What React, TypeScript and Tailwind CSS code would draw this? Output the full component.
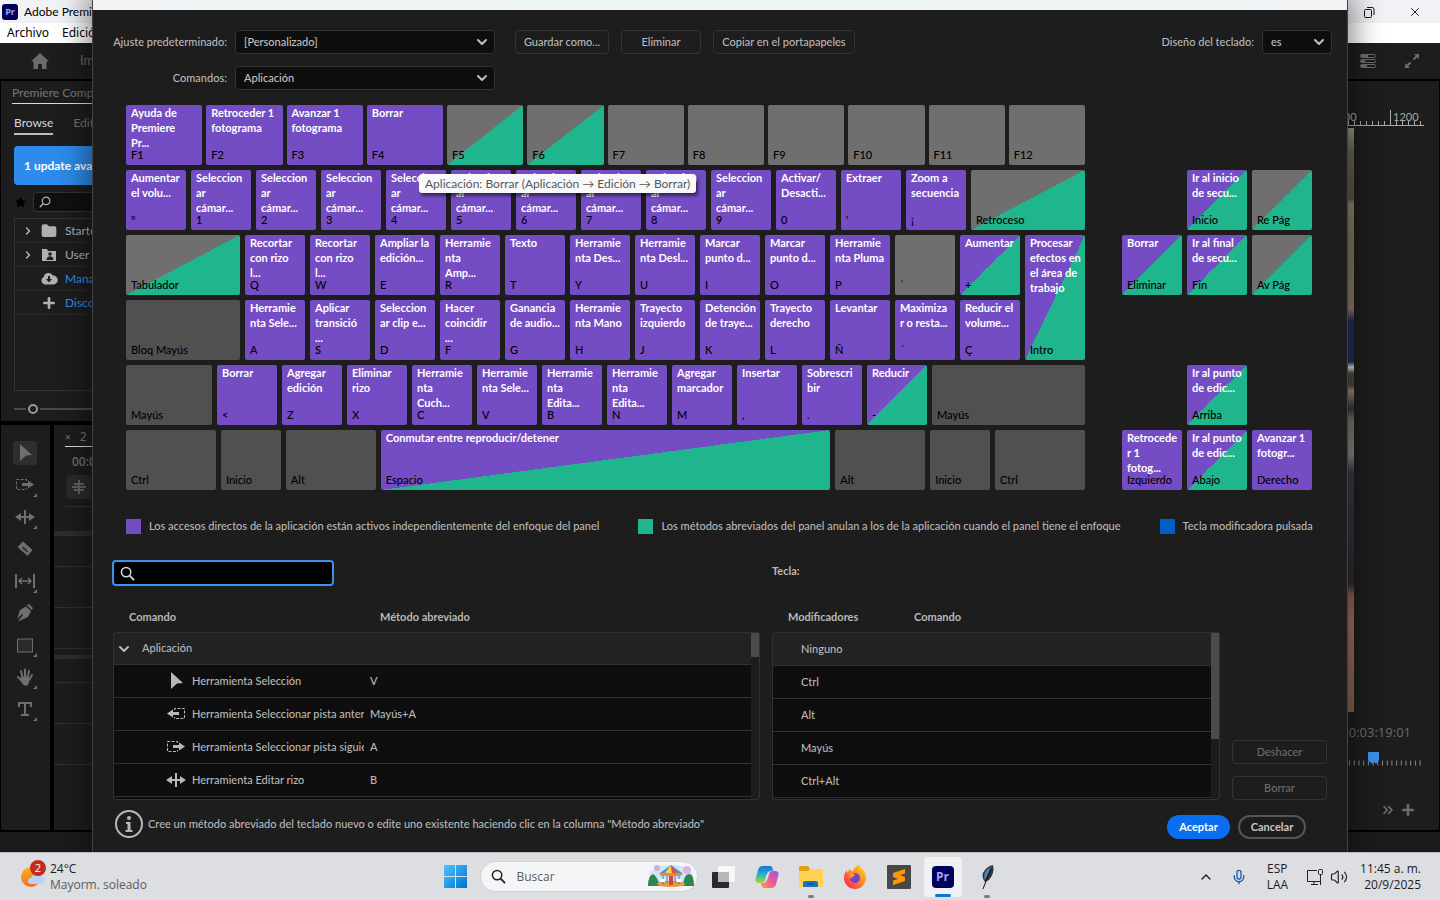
import type { ReactNode } from "react";
import {
  ChevronDown, ChevronRight, ChevronUp, ChevronsRight, Folder, Mic, Plus, Star, Volume2, X,
} from "lucide-react";

type Tone = "app" | "both" | "panel" | "free" | "mod";
type KeyDef = { k: string; t?: string[]; c?: Tone; w?: string };

const tones: Record<Tone, string> = {
  app: "bg-[#744cc4]",
  both: "bg-[linear-gradient(to_bottom_right,#744cc4_50%,#1fb58d_50%)]",
  panel: "bg-[linear-gradient(to_bottom_right,#6f6f6f_50%,#1fb58d_50%)]",
  free: "bg-[#6f6f6f]",
  mod: "bg-[#505050]",
};

const a = (k: string, ...t: string[]): KeyDef => ({ k, t, c: "app" });

const fRow: KeyDef[] = [
  a("F1", "Ayuda de", "Premiere", "Pr..."), a("F2", "Retroceder 1", "fotograma"),
  a("F3", "Avanzar 1", "fotograma"), a("F4", "Borrar"),
  { k: "F5", c: "panel" }, { k: "F6", c: "panel" },
  { k: "F7" }, { k: "F8" }, { k: "F9" }, { k: "F10" }, { k: "F11" }, { k: "F12" },
];

// Grow factors are key widths without their 10px of side padding.
const numberRow: KeyDef[] = [
  a("º", "Aumentar", "el volu..."),
  ...["1", "2", "3", "4", "5", "6", "7", "8", "9"].map((n) => a(n, "Seleccion", "ar", "cámar...")),
  a("0", "Activar/", "Desacti..."), a("'", "Extraer"), a("¡", "Zoom a", "secuencia"),
  { k: "Retroceso", c: "panel", w: "flex-[104]" },
];

const tabRow: KeyDef[] = [
  { k: "Tabulador", c: "panel", w: "flex-[104]" },
  a("Q", "Recortar", "con rizo", "l..."), a("W", "Recortar", "con rizo", "l..."),
  a("E", "Ampliar la", "edición..."), a("R", "Herramie", "nta", "Amp..."), a("T", "Texto"),
  a("Y", "Herramie", "nta Des..."), a("U", "Herramie", "nta Desl..."),
  a("I", "Marcar", "punto d..."), a("O", "Marcar", "punto d..."), a("P", "Herramie", "nta Pluma"),
  { k: "`" }, { k: "+", t: ["Aumentar"], c: "both" },
];

const capsRow: KeyDef[] = [
  { k: "Bloq Mayús", c: "mod", w: "flex-[104]" },
  a("A", "Herramie", "nta Sele..."), a("S", "Aplicar", "transició", "..."),
  a("D", "Seleccion", "ar clip e..."), a("F", "Hacer", "coincidir", "..."),
  a("G", "Ganancia", "de audio..."), a("H", "Herramie", "nta Mano"),
  a("J", "Trayecto", "izquierdo"), a("K", "Detención", "de traye..."),
  a("L", "Trayecto", "derecho"), a("Ñ", "Levantar"),
  a("´", "Maximiza", "r o resta..."), a("Ç", "Reducir el", "volume..."),
];

const shiftRow: KeyDef[] = [
  { k: "Mayús", c: "mod", w: "flex-[76]" },
  a("<", "Borrar"), a("Z", "Agregar", "edición"), a("X", "Eliminar", "rizo"),
  a("C", "Herramie", "nta", "Cuch..."), a("V", "Herramie", "nta Sele..."),
  a("B", "Herramie", "nta", "Edita..."), a("N", "Herramie", "nta", "Edita..."),
  a("M", "Agregar", "marcador"), a(",", "Insertar"), a(".", "Sobrescri", "bir"),
  { k: "-", t: ["Reducir"], c: "both" },
  { k: "Mayús", c: "mod", w: "flex-[143]" },
];

const bottomRow: KeyDef[] = [
  { k: "Ctrl", c: "mod", w: "flex-[80]" }, { k: "Inicio", c: "mod" }, { k: "Alt", c: "mod", w: "flex-[80]" },
  { k: "Espacio", t: ["Conmutar entre reproducir/detener"], c: "both", w: "flex-[440]" },
  { k: "Alt", c: "mod", w: "flex-[80]" }, { k: "Inicio", c: "mod" }, { k: "Ctrl", c: "mod", w: "flex-[80]" },
];

const navKeys: (KeyDef | null)[] = [
  null, null, null,
  null, { k: "Inicio", t: ["Ir al inicio", "de secu..."], c: "both" }, { k: "Re Pág", c: "panel" },
  { k: "Eliminar", t: ["Borrar"], c: "both" }, { k: "Fin", t: ["Ir al final", "de secu..."], c: "both" }, { k: "Av Pág", c: "panel" },
  null, null, null,
  null, { k: "Arriba", t: ["Ir al punto", "de edic..."], c: "both" }, null,
  a("Izquierdo", "Retrocede", "r 1", "fotog..."), { k: "Abajo", t: ["Ir al punto", "de edic..."], c: "both" }, a("Derecho", "Avanzar 1", "fotogr..."),
];

function Key({ def, tall }: { def: KeyDef; tall?: boolean }) {
  return (
    <button
      type="button"
      className={`flex min-w-0 flex-col justify-between rounded-[2px] px-[5px] pb-1 text-left text-[11px] whitespace-nowrap ${tall ? "h-[125px]" : "h-[60px]"} ${def.w ?? "flex-[50]"} ${tones[def.c ?? "free"]}`}
    >
      <span className="min-h-0 leading-[15px] font-bold text-white">
        {def.t?.map((line, i) => <span key={i} className="block">{line}</span>)}
      </span>
      <span className="leading-[13px] text-black">{def.k}</span>
    </button>
  );
}

function Row({ keys }: { keys: KeyDef[] }) {
  return <div className="flex gap-[5px]">{keys.map((d, i) => <Key key={i} def={d} />)}</div>;
}

function Keyboard() {
  return (
    <div className="mt-[15px] flex gap-[37px] pr-[35px] pl-[33px]">
      <div className="flex min-w-0 flex-[959] flex-col gap-[5px]">
        <div className="grid grid-cols-12 gap-1">{fRow.map((d) => <Key key={d.k} def={d} />)}</div>
        <Row keys={numberRow} />
        <div className="flex gap-[5px]">
          <div className="flex min-w-0 flex-[894] flex-col gap-[5px]">
            <Row keys={tabRow} />
            <Row keys={capsRow} />
          </div>
          <div className="flex min-w-0 flex-[60]">
            <Key tall def={{ k: "Intro", t: ["Procesar", "efectos en", "el área de", "trabajo"], c: "both" }} />
          </div>
        </div>
        <Row keys={shiftRow} />
        <Row keys={bottomRow} />
      </div>
      <div className="grid min-w-0 flex-[190] grid-cols-3 grid-rows-6 gap-[5px]">
        {navKeys.map((d, i) => (d ? <Key key={i} def={d} /> : <span key={i} />))}
      </div>
    </div>
  );
}

function Loupe({ className }: { className: string }) {
  return (
    <svg viewBox="0 0 16 16" className={className} fill="none" stroke="currentColor">
      <circle cx="6.500" cy="6.500" r="5" strokeWidth="1.600" />
      <path d="M10 10l5 5" strokeWidth="2" />
    </svg>
  );
}

function Picker({ id, value, className }: { id: string; value: string; className: string }) {
  return (
    <span className={`relative flex h-6 ${className}`}>
      <select id={id} className="w-full appearance-none rounded border border-[#333] bg-[#0e0e0e] pr-6 pl-2 text-[11px] font-medium text-[#c0c0c0]">
        <option>{value}</option>
      </select>
      <ChevronDown className="pointer-events-none absolute top-1 right-[5px] size-4 text-[#c0c0c0]" strokeWidth={3} />
    </span>
  );
}

function SmallButton({ children, className = "", disabled }: { children: ReactNode; className?: string; disabled?: boolean }) {
  return (
    <button type="button" disabled={disabled} className={`h-6 rounded border border-[#333] text-[11px] leading-4 whitespace-nowrap text-[#b8b8b8] disabled:text-[#6b6b6b] ${className}`}>
      {children}
    </button>
  );
}

function ArrowIcon() {
  return <svg viewBox="0 0 20 20" className="size-5 fill-current"><path d="M5 1l12 11-6 .4L5 18z" /></svg>;
}
function TrackIcon({ back }: { back?: boolean }) {
  return (
    <svg viewBox="0 0 20 20" className={`size-5 ${back ? "-scale-x-100" : ""}`}>
      <path d="M11.500 6V4.500h-10v10h10V13" fill="none" stroke="currentColor" strokeDasharray="3 1.500" />
      <path d="M7 8h6V5.500l6 4-6 4V11H7z" fill="currentColor" />
    </svg>
  );
}
function RippleIcon() {
  return <svg viewBox="0 0 20 20" className="size-5 fill-current"><path d="M9 3h2v14H9zM0 10l6-4v3h3v2H6v3zM20 10l-6-4v3h-3v2h3v3z" /></svg>;
}

const commands: { icon: ReactNode; name: string; shortcut: string }[] = [
  { icon: <ArrowIcon />, name: "Herramienta Selección", shortcut: "V" },
  { icon: <TrackIcon back />, name: "Herramienta Seleccionar pista anter", shortcut: "Mayús+A" },
  { icon: <TrackIcon />, name: "Herramienta Seleccionar pista siguie", shortcut: "A" },
  { icon: <RippleIcon />, name: "Herramienta Editar rizo", shortcut: "B" },
];
const modifiers = ["Ninguno", "Ctrl", "Alt", "Mayús", "Ctrl+Alt"];

const line = "border-[#313131]";

function ScrollCell({ rows, thumb }: { rows: number; thumb: string }) {
  return (
    <td rowSpan={rows} className={`rounded-r border-y border-r bg-[#1d1d1d] p-0 align-top ${line}`}>
      <div className={`w-2 bg-[#4b4b4b] ${thumb}`} />
    </td>
  );
}

function CommandTable() {
  return (
    <table className="w-full table-fixed border-separate border-spacing-0 text-left">
      <colgroup><col className="w-[251px]" /><col /><col className="w-[9px]" /></colgroup>
      <thead>
        <tr className="h-[23px] align-top leading-4">
          <th className="p-0 pl-4 font-bold">Comando</th>
          <th className="p-0 pl-4 font-bold">Método abreviado</th>
          <td />
        </tr>
      </thead>
      <tbody>
        <tr className="h-[33px] bg-[#222]">
          <td colSpan={2} className={`h-[33px] rounded-tl border-y border-l p-0 ${line}`}>
            <span className="flex items-center"><ChevronDown className="ml-[2px] size-4" strokeWidth={3} /><span className="pl-[10px]">Aplicación</span></span>
          </td>
          <ScrollCell rows={6} thumb="h-6" />
        </tr>
        {commands.map((c) => (
          <tr key={c.name} className="h-[33px] bg-[#0e0e0e]">
            <td className={`h-[33px] border-b border-l p-0 ${line}`}>
              <span className="flex items-center gap-[6px] overflow-hidden pl-[52px] whitespace-nowrap">
                <span className="shrink-0">{c.icon}</span><span className="overflow-hidden">{c.name}</span>
              </span>
            </td>
            <td className={`h-[33px] border-b p-0 pl-[6px] ${line}`}>{c.shortcut}</td>
          </tr>
        ))}
        <tr className="bg-[#0e0e0e]"><td colSpan={2} className={`h-[3px] rounded-bl border-b border-l p-0 ${line}`} /></tr>
      </tbody>
    </table>
  );
}

function ModifierTable() {
  return (
    <table className="w-full table-fixed border-separate border-spacing-0 text-left">
      <colgroup><col className="w-[126px]" /><col /><col className="w-[9px]" /></colgroup>
      <thead>
        <tr className="h-[23px] align-top leading-4">
          <th className="p-0 pl-4 font-bold">Modificadores</th>
          <th className="p-0 pl-4 font-bold">Comando</th>
          <td />
        </tr>
      </thead>
      <tbody>
        {modifiers.map((m, i) => (
          <tr key={m} className={i === 0 ? "bg-[#222]" : "bg-[#0e0e0e]"}>
            <td className={`border-b border-l p-0 pl-7 ${line} ${i === 0 ? "h-[34px] rounded-tl border-t" : "h-[33px]"}`}>{m}</td>
            <td className={`border-b p-0 ${line} ${i === 0 ? "border-t" : ""}`} />
            {i === 0 && <ScrollCell rows={6} thumb="h-[106px]" />}
          </tr>
        ))}
        <tr className="bg-[#0e0e0e]"><td colSpan={2} className={`h-[2px] rounded-bl border-b border-l p-0 ${line}`} /></tr>
      </tbody>
    </table>
  );
}

function ShortcutsDialog() {
  return (
    <section
      role="dialog"
      aria-label="Métodos abreviados de teclado"
      className="z-10 mr-[92px] ml-[92px] flex min-w-0 flex-col border-x border-[#444] bg-[#1d1d1d] font-['Lato','Noto_Sans',sans-serif] text-[11px] font-medium text-[#b8b8b8] shadow-[0_0_28px_6px_rgba(0,0,0,0.45)] [grid-area:1/1]"
    >
      <div className="h-[10px] bg-linear-to-r from-[#f0f2f5] via-[#eef5ef] to-[#f0f2f5]" />
      <div className="mt-5 flex items-center pr-[15px]">
        <label htmlFor="preset" className="w-[134px] text-right">Ajuste predeterminado:</label>
        <Picker id="preset" value="[Personalizado]" className="ml-2 w-[260px]" />
        <div className="ml-5 flex gap-3">
          <SmallButton className="w-[94px]">Guardar como...</SmallButton>
          <SmallButton className="w-20">Eliminar</SmallButton>
          <SmallButton className="w-[142px]">Copiar en el portapapeles</SmallButton>
        </div>
        <label htmlFor="layout" className="ml-auto">Diseño del teclado:</label>
        <Picker id="layout" value="es" className="ml-2 w-[70px]" />
      </div>
      <div className="mt-3 flex items-center">
        <label htmlFor="commands" className="w-[134px] text-right">Comandos:</label>
        <Picker id="commands" value="Aplicación" className="ml-2 w-[260px]" />
      </div>

      <div className="relative">
        <Keyboard />
        <div role="tooltip" className="absolute top-[84px] left-[326px] rounded-[3px] bg-[#f9f9f9] px-[6px] text-xs leading-[19px] font-normal whitespace-nowrap text-[#575757] shadow-[2px_3px_3px_rgba(0,0,0,0.5)]">
          Aplicación: Borrar (Aplicación → Edición → Borrar)
        </div>
      </div>

      <ul className="mt-7 flex gap-[39px] pl-[33px] leading-4 whitespace-nowrap">
        <li className="flex items-center gap-2"><span className="size-[15px] bg-[#744cc4]" />Los accesos directos de la aplicación están activos independientemente del enfoque del panel</li>
        <li className="flex items-center gap-2"><span className="size-[15px] bg-[#1fb58d]" />Los métodos abreviados del panel anulan a los de la aplicación cuando el panel tiene el enfoque</li>
        <li className="flex items-center gap-2"><span className="size-[15px] bg-[#005ec4]" />Tecla modificadora pulsada</li>
      </ul>

      <div className="mt-[26px] flex gap-3 pr-5 pl-5">
        <div className="min-w-0 flex-[647]">
          <label className="relative -ml-px flex w-[222px]">
            <span className="sr-only">Buscar comandos</span>
            <input type="text" className="h-[26px] w-full rounded border-2 border-[#3d90ee] bg-black pl-7 text-xs text-white outline-none" />
            <Loupe className="absolute top-[6px] left-2 size-[15px] text-[#d8d8d8]" />
          </label>
          <div className="mt-[23px]"><CommandTable /></div>
        </div>
        <div className="min-w-0 flex-[448]">
          <p className="h-[26px] leading-[22px] font-bold">Tecla:</p>
          <div className="mt-[23px]"><ModifierTable /></div>
        </div>
        <div className="flex w-[95px] flex-col justify-end gap-3">
          <SmallButton disabled>Deshacer</SmallButton>
          <SmallButton disabled>Borrar</SmallButton>
        </div>
      </div>

      <footer className="mt-[9px] mb-[13px] flex items-center pr-[41px] pl-[22px]">
        <svg viewBox="0 0 28 28" className="size-7">
          <circle cx="14" cy="14" r="13" fill="none" stroke="#b8b8b8" strokeWidth="2" />
          <circle cx="14" cy="8" r="2" fill="#b8b8b8" />
          <path d="M11 12h4.500v8H17.500v2h-7v-2H12.500v-6H11z" fill="#b8b8b8" />
        </svg>
        <p className="ml-[5px]">Cree un método abreviado del teclado nuevo o edite uno existente haciendo clic en la columna "Método abreviado"</p>
        <button type="button" className="mt-[6px] ml-auto h-6 w-[63px] rounded-full bg-[#0a6eee] leading-4 font-bold text-white">Aceptar</button>
        <button type="button" className="mt-[6px] ml-2 h-6 w-[68px] rounded-full border-2 border-[#555] leading-4 font-bold text-[#c8c8c8]">Cancelar</button>
      </footer>
    </section>
  );
}

function Corner() {
  return <svg viewBox="0 0 4 4" className="absolute right-0 bottom-0 size-1 fill-current"><path d="M4 0v4H0z" /></svg>;
}

const tools: { name: string; icon: ReactNode; corner?: boolean }[] = [
  { name: "Selección", icon: <ArrowIcon /> },
  { name: "Seleccionar pista", icon: <TrackIcon />, corner: true },
  { name: "Editar rizo", icon: <RippleIcon />, corner: true },
  { name: "Cuchilla", icon: <svg viewBox="0 0 20 20" className="size-5"><path d="M8 2.500L17.500 11 12.500 17 2.500 8z" fill="currentColor" /><path d="M7 8l6 5M9 8v3M11 9.500v3" stroke="#1d1d1d" /></svg> },
  { name: "Desplazar", icon: <svg viewBox="0 0 20 20" className="size-5" fill="none" stroke="currentColor"><path d="M1 3v14M19 3v14" strokeWidth="2" /><path d="M4 10h12M7 7l-3 3 3 3M13 7l3 3-3 3" strokeWidth="1.500" /></svg>, corner: true },
  { name: "Pluma", icon: <svg viewBox="0 0 20 20" className="size-5 fill-current"><path d="M12 2l2-1 4 4-1.500 2zM11 3.500L16 8l-3 6-9 4-.6-.6L8 12l-1-1-5 5 3-9z" /></svg> },
  { name: "Rectángulo", icon: <svg viewBox="0 0 20 20" className="size-5"><rect x="2.500" y="4" width="15" height="13" fill="#2b2b2b" stroke="currentColor" /></svg>, corner: true },
  { name: "Mano", icon: <svg viewBox="0 0 20 20" className="size-5" stroke="currentColor" strokeWidth="2" strokeLinecap="round"><path d="M7.500 11L6 4M10 10V2.500M12.500 11L14 4M14.500 12.500l2.500-4.500M7 14l-4-4" fill="none" /><path d="M7 10h6l1.500 2-2 6H9l-3-4z" fill="currentColor" strokeWidth="1" /></svg>, corner: true },
  { name: "Texto", icon: <svg viewBox="0 0 20 20" className="size-5 fill-current"><path d="M3 3h14v5h-2V5h-4v10h3v2H6v-2h3V5H5v3H3z" /></svg>, corner: true },
];

const folderRow = "flex h-6 items-center border-b border-[#292929] pl-[7px]";

function ComposerPanel() {
  return (
    <div className="h-[340px] bg-[#1d1d1d] px-[11px] font-['Lato',sans-serif]">
      <p className="h-[23px] border-b border-[#ddd] text-xs leading-6 text-[#777]">Premiere Composer</p>
      <div className="flex gap-5 pt-[10px] pl-[2px] text-xs leading-[18px]">
        <a href="#browse" className="border-b-2 border-[#bdbdbd] pb-[1px] text-[#d8d8d8]">Browse</a>
        <a href="#edit" className="text-[#777]">Edit</a>
      </div>
      <button type="button" className="mt-[11px] ml-[2px] h-[39px] w-[220px] rounded bg-[#2d8ceb] pl-[10px] text-left text-xs font-bold text-white">1 update available</button>
      <div className="mt-[7px] flex items-center gap-[7px] pl-[3px]">
        <Star className="size-[11px] fill-black text-black" />
        <label className="relative flex flex-1">
          <span className="sr-only">Buscar</span>
          <input type="text" className="h-5 w-full rounded border border-[#333] bg-[#101010]" />
          <Loupe className="absolute top-1 left-[6px] size-3 -scale-x-100 text-[#b0b0b0]" />
        </label>
      </div>
      <div className="mt-[6px] ml-[2px] h-[173px] border border-[#333] text-xs text-[#b0b0b0]">
        <div className={folderRow}><ChevronRight className="size-3" strokeWidth={3} /><Folder className="ml-[7px] size-4 fill-current" /><span className="ml-2">Starter</span></div>
        <div className={folderRow}><ChevronRight className="size-3" strokeWidth={3} />
          <svg viewBox="0 0 16 16" className="ml-[7px] size-4"><path d="M1 2h5l1 2h8v10H1z" fill="currentColor" /><circle cx="9" cy="7" r="1.800" fill="#1d1d1d" /><path d="M5.500 13c0-5 7-5 7 0z" fill="#1d1d1d" /></svg>
          <span className="ml-2">User</span></div>
        <div className={folderRow}>
          <svg viewBox="0 0 18 16" className="ml-[18px] h-4 w-[18px]"><path d="M4.500 13.500a4 4 0 01-.8-7.500A5 5 0 0113 4.500a4.500 4.500 0 01.5 9z" fill="currentColor" /><path d="M8 5h2v3h2l-3 3.500L6 8h2z" fill="#1d1d1d" /></svg>
          <a href="#manage" className="ml-[7px] text-[#2d8ceb]">Manage</a></div>
        <div className={folderRow}><Plus className="ml-[19px] size-4" strokeWidth={4} /><a href="#discover" className="ml-2 text-[#2d8ceb]">Discover</a></div>
      </div>
      <div className="mt-[13px] ml-[2px] flex items-center gap-[2px]">
        <span className="h-[2px] w-3 bg-[#4a4a4a]" /><span className="size-[10px] rounded-full border-2 border-[#9a9a9a]" /><span className="h-[2px] flex-1 bg-[#4a4a4a]" />
      </div>
    </div>
  );
}

function Workspace() {
  return (
    <div className="flex min-w-0 flex-col bg-black font-['Noto_Sans',sans-serif] [grid-area:1/1]">
      <header className="flex h-[23px] items-center bg-[#f0f2f5] pr-[18px] pl-[2px] text-black">
        <PrLogo small />
        <span className="ml-[6px] font-['Lato',sans-serif] text-xs">Adobe Premiere Pro</span>
        <button type="button" aria-label="Restaurar" className="mr-[33px] ml-auto">
          <svg viewBox="0 0 12 12" className="size-3" fill="none" stroke="#111"><rect x="1.500" y="3.500" width="7" height="8" rx="1" /><path d="M4 1.500h5q2 0 2 2V9" /></svg>
        </button>
        <button type="button" aria-label="Cerrar"><X className="size-[14px]" strokeWidth={1.500} /></button>
      </header>
      <nav className="flex h-5 items-center gap-[13px] bg-white pl-[7px] text-xs text-black"><span>Archivo</span><span>Edición</span></nav>
      <div className="mb-[2px] flex h-9 items-center bg-[#1d1d1d] pr-5 pl-[31px] text-[#6c6c6c]">
        <svg viewBox="0 0 18 16" className="h-4 w-[18px] fill-current"><path d="M9 0l9 8.500h-2.500V16H11v-5H7v5H2.500V8.500H0z" /></svg>
        <span className="ml-[31px] font-['Lato',sans-serif] text-[13px]">Importar</span>
        <svg viewBox="0 0 16 14" className="mr-7 ml-auto h-[14px] w-4" fill="none" stroke="currentColor"><rect x=".5" y=".5" width="15" height="3" rx="1" /><rect x=".5" y="5.500" width="15" height="3" rx="1" /><rect x=".5" y="10.500" width="15" height="3" rx="1" /><path d="M1 2h7M1 7h4M1 12h6" strokeWidth="2" /></svg>
        <svg viewBox="0 0 16 16" className="size-4" stroke="currentColor" strokeWidth="2"><path d="M9.500 6.500L14 2M6.500 9.500L2 14" /><path d="M10 1h5v5zM6 15H1v-5z" fill="currentColor" stroke="none" /></svg>
      </div>
      <div className="flex flex-1 gap-1 px-px">
        <div className="flex min-w-0 flex-1 flex-col gap-1">
          <ComposerPanel />
          <div className="flex flex-1 gap-1">
            <div className="flex w-[49px] flex-col items-center gap-2 bg-[#1d1d1d] pt-4 pr-[2px] text-[#6f6f6f]">
              {tools.map((t, i) => (
                <button key={t.name} type="button" aria-label={t.name} className={`relative flex size-6 items-center justify-center rounded-[3px] ${i === 0 ? "bg-[#2e2e2e]" : ""}`}>
                  {t.icon}{t.corner && <Corner />}
                </button>
              ))}
            </div>
            <div className="flex-1 bg-[#1d1d1d] text-[#777]">
              <p className="ml-[11px] h-[22px] border-b border-[#ddd] text-xs leading-6"><span className="mr-[9px] text-[10px]">×</span>2</p>
              <p className="mt-[5px] ml-[18px] text-xs leading-5 font-medium">00:00</p>
              <div className="mt-[3px] ml-[13px] flex size-6 items-center justify-center rounded-[3px] bg-[#2b2b2b]">
                <svg viewBox="0 0 16 16" className="size-4" stroke="currentColor" strokeWidth="1.500"><path d="M8 1v14M3 5h4M9 5h4M1 8h6M9 8h6M3 11h4M9 11h4" /></svg>
              </div>
              <div className="mt-[7px] ml-3 h-px bg-[#333]" />
              <div className="mt-6 h-[5px] bg-[#2e2e2e]" />
              <div className="h-[31px] border-b border-[#303030]" /><div className="h-[41px] border-b border-[#303030]" /><div className="h-[41px] border-b border-[#303030]" />
              <div className="mt-[6px] h-1 bg-[#2e2e2e]" />
              <div className="h-6 border-b border-[#303030]" /><div className="h-[41px] border-b border-[#303030]" /><div className="h-[41px] border-b border-[#303030]" />
            </div>
          </div>
        </div>
        <div className="flex w-[400px] flex-col bg-[#1d1d1d] pt-[29px] text-[#6c6c6c]">
          <div className="mr-[15px] flex h-4 justify-end border-b border-[#aaa]">
            <svg viewBox="0 0 90 15" className="h-[15px] w-[90px]">
              <path d="M56.500 0v15" stroke="#aaa" />
              <path d="M2 13h88" stroke="#aaa" strokeWidth="4" strokeDasharray="1 5" />
              <text x="59" y="11" fontSize="11" fill="#aaa" fontFamily="Lato">1200</text>
              <text x="-3" y="11" fontSize="11" fill="#aaa" fontFamily="Lato">1100</text>
            </svg>
          </div>
          <div className="mt-[2px] mr-[85px] h-[584px] bg-[linear-gradient(#9a9a86,#6c6850_4%,#5c543e_12%,#8c8670_13%,#7d785c_20%,#857f60_29%,#9a7a6a_31%,#232e58_33%,#232e58_40%,#e0e0e0_41%,#4a5040_42%,#44493c_44%,#a98878_45%,#33363c_48%,#77746a_50%,#8b8880_56%,#3f3846_59%,#2e2832_78%,#8f6256_80%,#a4705f_85%,#82654f)]" />
          <p className="mt-[10px] mr-[28px] text-right font-['Open_Sans',sans-serif] text-[13px] leading-5 font-medium">00:03:19:01</p>
          <div className="mt-[8px] mr-[15px] flex justify-end">
            <svg viewBox="0 0 90 16" className="h-4 w-[90px]"><path d="M1 13h89" stroke="#8a8a8a" strokeWidth="5" strokeDasharray="1 3.700" /><path d="M34 2h11v8l-3 4-2-2-2 2-4-4z" fill="#3d90ee" /></svg>
          </div>
          <div className="mt-9 mr-[23px] flex items-center justify-end gap-1"><ChevronsRight className="size-4" strokeWidth={2.500} /><Plus className="size-4" strokeWidth={4} /></div>
        </div>
      </div>
      <div className="mt-[2px] h-5 bg-[#1b1b1b]" />
    </div>
  );
}

function PrLogo({ small }: { small?: boolean }) {
  return (
    <span className={`flex items-center justify-center bg-[#00005b] font-['Open_Sans',sans-serif] font-bold text-[#a3a3ff] ${small ? "size-4 rounded-[3px] text-[9px]" : "size-[22px] rounded text-xs"}`}>Pr</span>
  );
}

const slot = "relative flex h-10 w-[38px] items-center justify-center rounded";

function Taskbar() {
  return (
    <footer className="relative z-20 flex h-12 items-center justify-between border-t border-[#bbb] bg-[#dcdee1] pr-[19px] pl-5 font-['Open_Sans',sans-serif] text-xs text-[#1c1c1c]">
      <div className="flex flex-1 items-center gap-1">
        <svg viewBox="0 0 26 28" className="mb-[5px] h-7 w-[26px]">
          <defs><linearGradient id="sun" x1="0" y1="0" x2="0" y2="1"><stop stopColor="#f8b32d" /><stop offset="1" stopColor="#f0701c" /></linearGradient></defs>
          <circle cx="11" cy="17" r="10" fill="url(#sun)" /><path d="M11 24a3 3 0 010-6 5 5 0 018-2 4 4 0 013 8z" fill="#b9d2fa" /><circle cx="18" cy="8" r="8" fill="#c42b1c" />
          <text x="18" y="12" fontSize="11" textAnchor="middle" fill="#fff" fontFamily="Open Sans">2</text>
        </svg>
        <div className="leading-4"><p>24°C</p><p className="text-[#5a5c60]">Mayorm. soleado</p></div>
      </div>
      <div className="flex items-center gap-[6px] pl-[8px]">
        <button type="button" aria-label="Inicio" className="mr-[7px]">
          <svg viewBox="0 0 23 23" className="size-[23px]"><defs><linearGradient id="win" x1="0" y1="0" x2="1" y2="1"><stop stopColor="#4cc6fb" /><stop offset="1" stopColor="#0070d4" /></linearGradient></defs><path d="M0 0h11v11H0zM12 0h11v11H12zM0 12h11v11H0zM12 12h11v11H12z" fill="url(#win)" /></svg>
        </button>
        <label className="relative flex w-[218px]">
          <Loupe className="absolute top-[8px] left-[11px] size-[15px] text-[#222]" />
          <input type="text" placeholder="Buscar" aria-label="Buscar" className="h-[31px] w-full rounded-full border border-[#d0d2d5] bg-[#f4f5f6] pl-9 text-xs placeholder:text-[#5c5c5c]" />
          <svg viewBox="0 0 48 24" className="absolute top-[3px] right-[3px] h-6 w-12">
            <ellipse cx="24" cy="12" rx="22" ry="11" fill="#cfe6f5" /><circle cx="10" cy="4" r="3" fill="#dba9dc" /><circle cx="40" cy="6" r="4" fill="#e0b3dd" />
            <path d="M1 22q0-10 5-12 4 2 7 12zM36 22q1-12 6-12t5 12z" fill="#2e8554" /><ellipse cx="24" cy="20" rx="14" ry="3" fill="#e99a35" />
            <path d="M13 9L24 1l11 8z" fill="#4d8fdc" /><path d="M18 9l6-8 1 8z" fill="#f9d04e" /><path d="M25 9l-1-8 6 8z" fill="#e0503a" /><path d="M12 9h24l-2 3H14z" fill="#ee8a2c" />
            <path d="M16 12v8M32 12v8M20 12v7M28 12v7" stroke="#3d7fd6" /><path d="M22 12h4v9h-4z" fill="#d94332" /><path d="M14 15h4v3h-4zM30 15h4v3h-4z" fill="#fff" />
          </svg>
        </label>
        <button type="button" aria-label="Vista de tareas" className={slot}>
          <svg viewBox="0 0 24 24" className="size-6"><rect x="7" y="1" width="17" height="16" fill="#f8f8f8" /><rect x="1" y="7" width="17" height="16" rx="1" fill="#2b2b2b" /><path d="M7 7h11v10H7z" fill="#b9b9b9" /></svg>
        </button>
        <button type="button" aria-label="Copilot" className={slot}>
          <svg viewBox="0 0 24 24" className="size-6"><defs><linearGradient id="cpa" x1="0" y1="0" x2="0" y2="1"><stop stopColor="#1b6fe0" /><stop offset=".5" stopColor="#27b3c8" /><stop offset="1" stopColor="#b7d332" /></linearGradient><linearGradient id="cpb" x1="1" y1="0" x2="0" y2="1"><stop stopColor="#9a58e8" /><stop offset=".5" stopColor="#ec5a94" /><stop offset="1" stopColor="#fb9a4a" /></linearGradient></defs>
            <path d="M8 1h7q2 0 2.500 2L18 6h-2q-3 0-4 3l-2 6q-1 3-4 3H4q-4 0-3.500-4L3 5q1-4 5-4z" fill="url(#cpa)" /><path d="M16 23H9q-2 0-2.500-2L6 18h2q3 0 4-3l2-6q1-3 4-3h2q4 0 3.500 4L21 19q-1 4-5 4z" fill="url(#cpb)" /><path d="M12 9h2l-2 6h-2z" fill="#dcdee1" /></svg>
        </button>
        <button type="button" aria-label="Explorador de archivos" className={slot}>
          <svg viewBox="0 0 24 24" className="size-6"><path d="M0 3q0-2 2-2h7l2 3h11q2 0 2 2v15q0 1-1 1H1q-1 0-1-1z" fill="#e0a10f" /><path d="M0 6h9l2-2h12l1 1v16q0 1-1 1H1q-1 0-1-1z" fill="#ffd256" /><path d="M4 22v-4q0-2 2-2h11q2 0 2 2v4z" fill="#1474c4" /><path d="M8 19h7" stroke="#0b5594" strokeWidth="1.500" /></svg>
          <span className="absolute -bottom-px h-[3px] w-[6px] rounded-full bg-[#7d7d7d]" />
        </button>
        <button type="button" aria-label="Firefox" className={slot}>
          <svg viewBox="0 0 24 24" className="size-6"><defs><linearGradient id="ff" x1="1" y1="0" x2="0" y2="1"><stop stopColor="#ffe226" /><stop offset=".45" stopColor="#ff8a1e" /><stop offset="1" stopColor="#f5156c" /></linearGradient></defs><path d="M16 0q2 4 4 5 3 3 3 8a11 11 0 01-22 0q0-5 3-8v3l3-4 2 3q3-6 7-7z" fill="url(#ff)" /><circle cx="12" cy="13" r="5" fill="#7a3fd0" /><path d="M6 8q4-1 6 2l-2 2q-2 0-2 2-2-3-2-6z" fill="#ff9a1f" /></svg>
        </button>
        <button type="button" aria-label="Sublime Text" className={slot}>
          <svg viewBox="0 0 24 24" className="size-6"><rect width="24" height="24" rx="1" fill="#484848" /><path d="M18 4v4.500l-5 1.500 5 2v4L6 20v-4.500l5-1.500-5-2V8z" fill="#ff9800" /></svg>
        </button>
        <button type="button" aria-label="Premiere Pro" className={`${slot} bg-[#f0f1f3]`}>
          <PrLogo /><span className="absolute bottom-0 h-[3px] w-4 rounded-full bg-[#0078d4]" />
        </button>
        <button type="button" aria-label="Editor" className={slot}>
          <svg viewBox="0 0 16 24" className="h-6 w-4"><path d="M14 0q2 8-4 15L6 17Q1 10 6 5q3-4 8-5z" fill="#2b3540" /><path d="M13 2Q9 8 6 15q-2-5 1-9 2-3 6-4z" fill="#4f87b8" /><path d="M12 3L4 24" stroke="#111" /></svg>
          <span className="absolute -bottom-px h-[3px] w-[6px] rounded-full bg-[#7d7d7d]" />
        </button>
      </div>
      <div className="flex flex-1 items-center justify-end">
        <ChevronUp className="size-4" /><Mic className="ml-[17px] size-4 text-[#1a5ba8]" />
        <p className="ml-5 text-center leading-4">ESP<br />LAA</p>
        <svg viewBox="0 0 18 18" className="ml-[18px] size-[18px]" fill="none" stroke="#222"><path d="M11 2.500H1.500v11h13V9M5 16.500h7M8 14v2" /><rect x="12.500" y="1.500" width="4" height="5" rx="1" /><path d="M14.500 7v10" /></svg>
        <Volume2 className="ml-[6px] size-[18px]" strokeWidth={1.500} />
        <p className="ml-3 text-right leading-4">11:45 a. m.<br />20/9/2025</p>
      </div>
    </footer>
  );
}

export default function App() {
  return (
    <div className="flex min-h-screen flex-col bg-black">
      <main className="grid flex-1 grid-cols-1"><Workspace /><ShortcutsDialog /></main>
      <Taskbar />
    </div>
  );
}
